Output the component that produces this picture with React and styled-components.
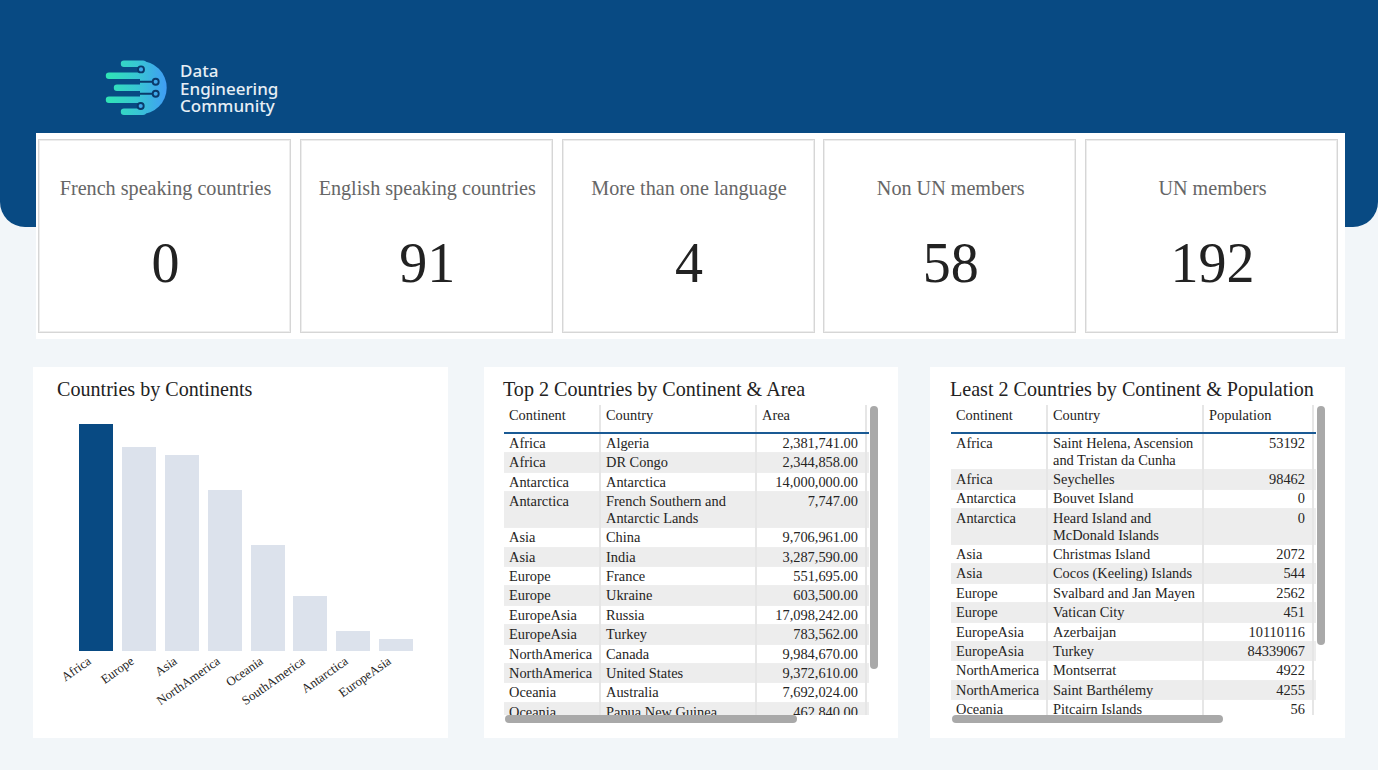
import React from "react";
import styled, { createGlobalStyle } from "styled-components";

const GlobalStyle = createGlobalStyle`
  html, body {
    margin: 0;
    padding: 0;
    background: #f2f6f9;
    font-family: "Liberation Serif", "Times New Roman", serif;
  }
`;

const Page = styled.div`
  min-height: 770px;
  box-sizing: border-box;
  overflow: hidden;
`;

const Header = styled.header`
  height: 227px;
  box-sizing: border-box;
  padding: 60px 0 0 105px;
  background: #084a83;
  border-radius: 0 0 25px 25px;
`;

const Brand = styled.div`
  display: flex;
  align-items: flex-start;
  gap: 9px;
`;

const BrandName = styled.div`
  font-family: "Noto Sans", sans-serif;
  font-size: 17px;
  font-weight: 500;
  line-height: 17.5px;
  color: #e6eef5;
  margin-top: 2px;
`;

const Main = styled.main`
  margin: -94px 33px 0 0;
`;

const KpiStrip = styled.section`
  margin-left: 36px;
  padding: 6px 7px 6px 2px;
  display: flex;
  justify-content: space-between;
  background: #fff;
`;

const KpiCard = styled.div`
  width: 253px;
  height: 194px;
  box-sizing: border-box;
  border: 1px solid #d6d6d6;
  box-shadow: inset 0 0 0 1px #ededed;
  padding: 37px 0 0 2px;
  text-align: center;
`;

const KpiTitle = styled.div`
  font-size: 20.16px;
  line-height: 22px;
  color: #666;
`;

const KpiValue = styled.div`
  margin-top: 32px;
  font-size: 56px;
  line-height: 64px;
  color: #222;
`;

const PanelRow = styled.section`
  margin: 28px 0 0 33px;
  display: grid;
  grid-template-columns: 451px 446px 415px;
`;

const Panel = styled.div`
  width: ${(p) => p.$width}px;
  height: 371px;
  box-sizing: border-box;
  padding: 11px 0 0 ${(p) => p.$inset}px;
  background: #fff;
`;

const PanelTitle = styled.h2`
  margin: 0 0 0 ${(p) => p.$nudge || 0}px;
  font-size: 20.1px;
  font-weight: 400;
  line-height: 22px;
  color: #222;
  white-space: nowrap;
`;

const ChartSvg = styled.svg`
  display: block;
  margin-top: 1px;
`;

const TableFrame = styled.div`
  position: relative;
  width: 375px;
  height: 318px;
  margin-top: 5px;
`;

const TableClip = styled.div`
  width: 365px;
  height: 310px;
  overflow: hidden;
`;

const Thumb = styled.div`
  position: absolute;
  background: #a9a9a9;
  border-radius: 5px;
`;

const VerticalThumb = styled(Thumb)`
  left: 366px;
  top: 1px;
  width: 8px;
`;

const HorizontalThumb = styled(Thumb)`
  left: 1px;
  top: 310px;
  height: 8px;
`;

const Table = styled.table`
  border-collapse: collapse;
  table-layout: fixed;
  width: 458px;
  font-size: 14.4px;
  line-height: 16.75px;
  color: #252423;
`;

const HeadCell = styled.th`
  height: 28px;
  box-sizing: border-box;
  padding: 0 5px 7px;
  text-align: left;
  font-weight: 400;
  border-right: 2px solid #e6e6e6;
  border-bottom: 2px solid #1a5a94;
  background: #fff;
`;

const Row = styled.tr`
  background: ${(p) => (p.$odd ? "#ededed" : "#fff")};
  border-bottom: 1px solid #eee;
`;

const Cell = styled.td`
  padding: 0.9px ${(p) => (p.$num ? "7px" : "5px")} 0.75px 5px;
  vertical-align: top;
  text-align: ${(p) => (p.$num ? "right" : "left")};
  border-right: 2px solid #e6e6e6;
  overflow: hidden;
`;

const bars = [
  { name: "Africa", x: 79, top: 424, active: true },
  { name: "Europe", x: 122, top: 447 },
  { name: "Asia", x: 165, top: 455 },
  { name: "NorthAmerica", x: 208, top: 490 },
  { name: "Oceania", x: 251, top: 545 },
  { name: "SouthAmerica", x: 293, top: 596 },
  { name: "Antarctica", x: 336, top: 631 },
  { name: "EuropeAsia", x: 379, top: 639 },
];

const kpis = [
  ["French speaking countries", "0"],
  ["English speaking countries", "91"],
  ["More than one language", "4"],
  ["Non UN members", "58"],
  ["UN members", "192"],
];

const areaRows = [
  ["Africa", "Algeria", "2,381,741.00"],
  ["Africa", "DR Congo", "2,344,858.00"],
  ["Antarctica", "Antarctica", "14,000,000.00"],
  ["Antarctica", "French Southern and Antarctic Lands", "7,747.00"],
  ["Asia", "China", "9,706,961.00"],
  ["Asia", "India", "3,287,590.00"],
  ["Europe", "France", "551,695.00"],
  ["Europe", "Ukraine", "603,500.00"],
  ["EuropeAsia", "Russia", "17,098,242.00"],
  ["EuropeAsia", "Turkey", "783,562.00"],
  ["NorthAmerica", "Canada", "9,984,670.00"],
  ["NorthAmerica", "United States", "9,372,610.00"],
  ["Oceania", "Australia", "7,692,024.00"],
  ["Oceania", "Papua New Guinea", "462,840.00"],
];

const populationRows = [
  ["Africa", "Saint Helena, Ascension and Tristan da Cunha", "53192"],
  ["Africa", "Seychelles", "98462"],
  ["Antarctica", "Bouvet Island", "0"],
  ["Antarctica", "Heard Island and McDonald Islands", "0"],
  ["Asia", "Christmas Island", "2072"],
  ["Asia", "Cocos (Keeling) Islands", "544"],
  ["Europe", "Svalbard and Jan Mayen", "2562"],
  ["Europe", "Vatican City", "451"],
  ["EuropeAsia", "Azerbaijan", "10110116"],
  ["EuropeAsia", "Turkey", "84339067"],
  ["NorthAmerica", "Montserrat", "4922"],
  ["NorthAmerica", "Saint Barthélemy", "4255"],
  ["Oceania", "Pitcairn Islands", "56"],
];

const LogoMark = () => (
  <svg width="66" height="58" viewBox="0 0 66 58">
    <defs>
      <linearGradient id="logoFill" gradientUnits="userSpaceOnUse" x1="0" y1="0" x2="62" y2="0">
        <stop offset="0" stopColor="#2fe6b4" />
        <stop offset="0.5" stopColor="#38c8d2" />
        <stop offset="1" stopColor="#409cf5" />
      </linearGradient>
    </defs>
    <path d="M35 1a26.7 26.7 0 0 1 0 53.4z" fill="url(#logoFill)" />
    <g fill="none" stroke="url(#logoFill)" strokeWidth="6.4" strokeLinecap="round">
      <path d="M19 3.7h19M4 15.7h42M12 27.7h36M4 39.7h42M19 51.7h19" />
    </g>
    <g fill="none" stroke="#0a3a6b" strokeWidth="1.9">
      <path d="M33 9.4h1M35 21.7h13M35 33.7h13M33 46h1" />
      <circle cx="36" cy="9.4" r="3" fill="#3fa8ea" />
      <circle cx="50.7" cy="21.7" r="3" fill="#3fa8ea" />
      <circle cx="50.7" cy="33.7" r="3" fill="#3fa8ea" />
      <circle cx="35.7" cy="46" r="3" fill="#3fa8ea" />
    </g>
  </svg>
);

const BarChart = () => (
  <ChartSvg width="391" height="337" viewBox="57 401 391 337">
    {bars.map((b) => (
      <rect
        key={b.name}
        x={b.x}
        y={b.top}
        width="34"
        height={651 - b.top}
        fill={b.active ? "#084a83" : "#dce2ec"}
      />
    ))}
    {bars.map((b) => (
      <text
        key={b.name}
        x={b.x + 13}
        y={663}
        textAnchor="end"
        fontSize="12.8"
        fill="#252423"
        transform={`rotate(-35 ${b.x + 13} 663)`}
      >
        {b.name}
      </text>
    ))}
  </ChartSvg>
);

const DataTable = ({ lastColumn, rows, verticalThumb, horizontalThumb }) => (
  <TableFrame>
    <TableClip>
      <Table>
        <colgroup>
          <col style={{ width: 96 }} />
          <col style={{ width: 156 }} />
          <col style={{ width: 110 }} />
          <col />
        </colgroup>
        <thead>
          <tr>
            <HeadCell>Continent</HeadCell>
            <HeadCell>Country</HeadCell>
            <HeadCell>{lastColumn}</HeadCell>
            <HeadCell />
          </tr>
        </thead>
        <tbody>
          {rows.map(([continent, country, value], i) => (
            <Row key={i} $odd={i % 2 === 1}>
              <Cell>{continent}</Cell>
              <Cell>{country}</Cell>
              <Cell $num>{value}</Cell>
              <Cell />
            </Row>
          ))}
        </tbody>
      </Table>
    </TableClip>
    <VerticalThumb style={{ height: verticalThumb }} />
    <HorizontalThumb style={{ width: horizontalThumb }} />
  </TableFrame>
);

export default function App() {
  return (
    <Page>
      <GlobalStyle />
      <Header>
        <Brand>
          <LogoMark />
          <BrandName>
            Data
            <br />
            Engineering
            <br />
            Community
          </BrandName>
        </Brand>
      </Header>
      <Main>
        <KpiStrip>
          {kpis.map(([title, value]) => (
            <KpiCard key={title}>
              <KpiTitle>{title}</KpiTitle>
              <KpiValue>{value}</KpiValue>
            </KpiCard>
          ))}
        </KpiStrip>
        <PanelRow>
          <Panel $width={415} $inset={24}>
            <PanelTitle>Countries by Continents</PanelTitle>
            <BarChart />
          </Panel>
          <Panel $width={414} $inset={20}>
            <PanelTitle $nudge={-1}>Top 2 Countries by Continent &amp; Area</PanelTitle>
            <DataTable lastColumn="Area" rows={areaRows} verticalThumb={263} horizontalThumb={292} />
          </Panel>
          <Panel $width={415} $inset={21}>
            <PanelTitle $nudge={-1}>Least 2 Countries by Continent &amp; Population</PanelTitle>
            <DataTable lastColumn="Population" rows={populationRows} verticalThumb={239} horizontalThumb={271} />
          </Panel>
        </PanelRow>
      </Main>
    </Page>
  );
}
